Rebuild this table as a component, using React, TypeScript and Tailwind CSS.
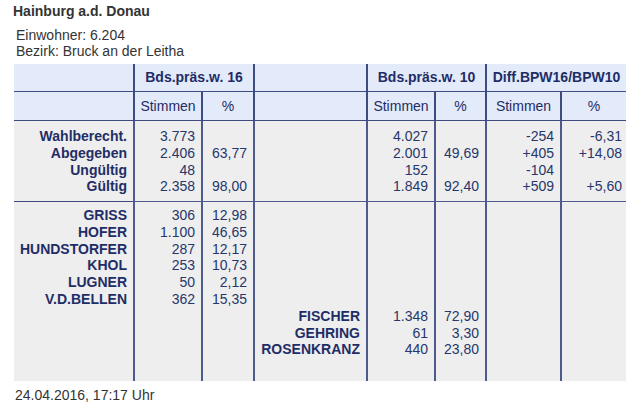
const head = 'bg-[#e3eafa] text-[#1f2d66] flex items-center justify-center'
const cell = 'bg-[#eeeeee] border-l-2 border-[#4d5b8c] text-right pr-[6px] leading-[16.8px]'

const candidates16 = [
  ['GRISS', '306', '12,98'],
  ['HOFER', '1.100', '46,65'],
  ['HUNDSTORFER', '287', '12,17'],
  ['KHOL', '253', '10,73'],
  ['LUGNER', '50', '2,12'],
  ['V.D.BELLEN', '362', '15,35'],
]

const candidates10 = [
  ['FISCHER', '1.348', '72,90'],
  ['GEHRING', '61', '3,30'],
  ['ROSENKRANZ', '440', '23,80'],
]

function Lines({ items, bold }: { items: string[]; bold?: boolean }) {
  return (
    <>
      {items.map((t, i) => (
        <div key={i} className={bold ? 'font-bold text-[#1f2d66]' : 'text-[#27366b]'}>
          {t || '\u00a0'}
        </div>
      ))}
    </>
  )
}

export default function App() {
  const blank6 = ['', '', '', '', '', '']
  return (
    <div className="w-[640px] h-[417px] bg-white text-[14px] font-['Liberation_Sans',Arial,sans-serif]">
      <div className="pl-[13px] pt-[3px] font-bold text-[#333333] leading-[17px]">Hainburg a.d. Donau</div>
      <div className="pl-[16px] pt-[7px] text-[#333333] leading-[16px]">
        <div>Einwohner: 6.204</div>
        <div>Bezirk: Bruck an der Leitha</div>
      </div>

      <div className="ml-[14px] mt-[5px] w-[612px] grid grid-cols-[119px_68px_52px_113px_68px_51px_75px_66px]">
        {/* header row 1 */}
        <div className={`${head} h-[28px] border-b border-[#3d4b80]`} />
        <div className={`${head} col-span-2 h-[28px] border-l-2 border-b border-[#3d4b80] font-bold`}>Bds.präs.w. 16</div>
        <div className={`${head} h-[28px] border-l-2 border-b border-[#3d4b80]`} />
        <div className={`${head} col-span-2 h-[28px] border-l-2 border-b border-[#3d4b80] font-bold`}>Bds.präs.w. 10</div>
        <div className={`${head} col-span-2 h-[28px] border-l-2 border-b border-[#3d4b80] font-bold`}>Diff.BPW16/BPW10</div>

        {/* header row 2 */}
        <div className={`${head} h-[29px] border-b border-[#3d4b80]`} />
        <div className={`${head} h-[29px] border-l-2 border-b border-[#3d4b80]`}>Stimmen</div>
        <div className={`${head} h-[29px] border-l-2 border-b border-[#3d4b80]`}>%</div>
        <div className={`${head} h-[29px] border-l-2 border-b border-[#3d4b80]`} />
        <div className={`${head} h-[29px] border-l-2 border-b border-[#3d4b80]`}>Stimmen</div>
        <div className={`${head} h-[29px] border-l-2 border-b border-[#3d4b80]`}>%</div>
        <div className={`${head} h-[29px] border-l-2 border-b border-[#3d4b80]`}>Stimmen</div>
        <div className={`${head} h-[29px] border-l-2 border-b border-[#3d4b80]`}>%</div>

        {/* section 1 */}
        <div className="bg-[#eeeeee] text-right pr-[6px] leading-[16.8px] h-[81px] pt-[7px] border-b border-[#3d4b80]">
          <Lines bold items={['Wahlberecht.', 'Abgegeben', 'Ungültig', 'Gültig']} />
        </div>
        <div className={`${cell} h-[81px] pt-[7px] border-b`}>
          <Lines items={['3.773', '2.406', '48', '2.358']} />
        </div>
        <div className={`${cell} h-[81px] pt-[7px] border-b`}>
          <Lines items={['', '63,77', '', '98,00']} />
        </div>
        <div className={`${cell} h-[81px] pt-[7px] border-b`} />
        <div className={`${cell} h-[81px] pt-[7px] border-b`}>
          <Lines items={['4.027', '2.001', '152', '1.849']} />
        </div>
        <div className={`${cell} h-[81px] pt-[7px] border-b`}>
          <Lines items={['', '49,69', '', '92,40']} />
        </div>
        <div className={`${cell} h-[81px] pt-[7px] border-b`}>
          <Lines items={['-254', '+405', '-104', '+509']} />
        </div>
        <div className={`${cell} h-[81px] pt-[7px] border-b !pr-[4px]`}>
          <Lines items={['-6,31', '+14,08', '', '+5,60']} />
        </div>

        {/* section 2 */}
        <div className="bg-[#eeeeee] text-right pr-[6px] leading-[16.8px] h-[179px] pt-[5px]">
          <Lines bold items={candidates16.map((c) => c[0])} />
        </div>
        <div className={`${cell} h-[179px] pt-[5px]`}>
          <Lines items={candidates16.map((c) => c[1])} />
        </div>
        <div className={`${cell} h-[179px] pt-[5px]`}>
          <Lines items={candidates16.map((c) => c[2])} />
        </div>
        <div className={`${cell} h-[179px] pt-[5px]`}>
          <Lines bold items={[...blank6, ...candidates10.map((c) => c[0])]} />
        </div>
        <div className={`${cell} h-[179px] pt-[5px]`}>
          <Lines items={[...blank6, ...candidates10.map((c) => c[1])]} />
        </div>
        <div className={`${cell} h-[179px] pt-[5px]`}>
          <Lines items={[...blank6, ...candidates10.map((c) => c[2])]} />
        </div>
        <div className={`${cell} h-[179px] pt-[5px]`} />
        <div className={`${cell} h-[179px] pt-[5px]`} />
      </div>

      <div className="pl-[15px] pt-[6px] text-[#333333] leading-[16px]">24.04.2016, 17:17 Uhr</div>
    </div>
  )
}
